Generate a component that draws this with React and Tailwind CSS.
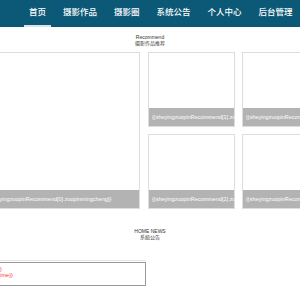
import React from "react";

const navItems = ["首页", "摄影作品", "摄影圈", "系统公告", "个人中心", "后台管理"];

const font = { fontFamily: '"Liberation Sans", "Noto Sans CJK SC", sans-serif' };

function Caption({ children }) {
  return (
    <div className="h-[18px] bg-[#b3b3b3] px-[3px] text-[5.5px] leading-[18px] text-white whitespace-nowrap overflow-hidden">
      {children}
    </div>
  );
}

function SmallCard({ idx }) {
  return (
    <div className="w-[87px] h-[75px] border border-[#dddddd] flex flex-col">
      <div className="flex-1" />
      <Caption>{`{{sheyingzuopinRecommend[${idx}].zuopinmingcheng}}`}</Caption>
    </div>
  );
}

export default function App() {
  return (
    <div className="w-[300px] h-[300px] overflow-hidden bg-white" style={font}>
      {/* nav */}
      <div className="h-[27px] bg-[#0b5877] flex items-stretch pl-[24px] gap-[7px]">
        {navItems.map((n, i) => (
          <div
            key={n}
            className={`px-[5px] flex items-center text-[8.5px] font-medium text-white whitespace-nowrap border-b-2 ${
              i === 0 ? "border-[#d9e4ea]" : "border-transparent"
            }`}
          >
            {n}
          </div>
        ))}
      </div>

      {/* recommend */}
      <div className="mt-[7px] flex flex-col items-center text-[5px] leading-[6px] text-[#333]">
        <div>Recommend</div>
        <div>摄影作品推荐</div>
      </div>
      <div className="mt-[6px] ml-[-17px] w-[346px] flex gap-[8px]">
        <div className="w-[157px] h-[157px] border border-[#dddddd] flex flex-col">
          <div className="flex-1" />
          <Caption>{"{{sheyingzuopinRecommend[0].zuopinmingcheng}}"}</Caption>
        </div>
        <div className="grid grid-cols-2 gap-[7px]">
          <SmallCard idx={1} />
          <SmallCard idx={3} />
          <SmallCard idx={2} />
          <SmallCard idx={4} />
        </div>
      </div>

      {/* news */}
      <div className="mt-[19px] flex flex-col items-center text-[5px] leading-[6px] text-[#333]">
        <div>HOME NEWS</div>
        <div>系统公告</div>
      </div>
      <div className="mt-[20px] ml-[-40px] w-[186px] border-t border-[#e5e5e5] pt-[1px]">
        <div className="h-[24px] border border-[#999999] pl-[13px] pt-[3px] text-[5.5px] leading-[6px] text-[#ff3333]">
          <div>{"{{item.title}}"}</div>
          <div>{"{{item.addtime}}"}</div>
        </div>
      </div>
    </div>
  );
}
